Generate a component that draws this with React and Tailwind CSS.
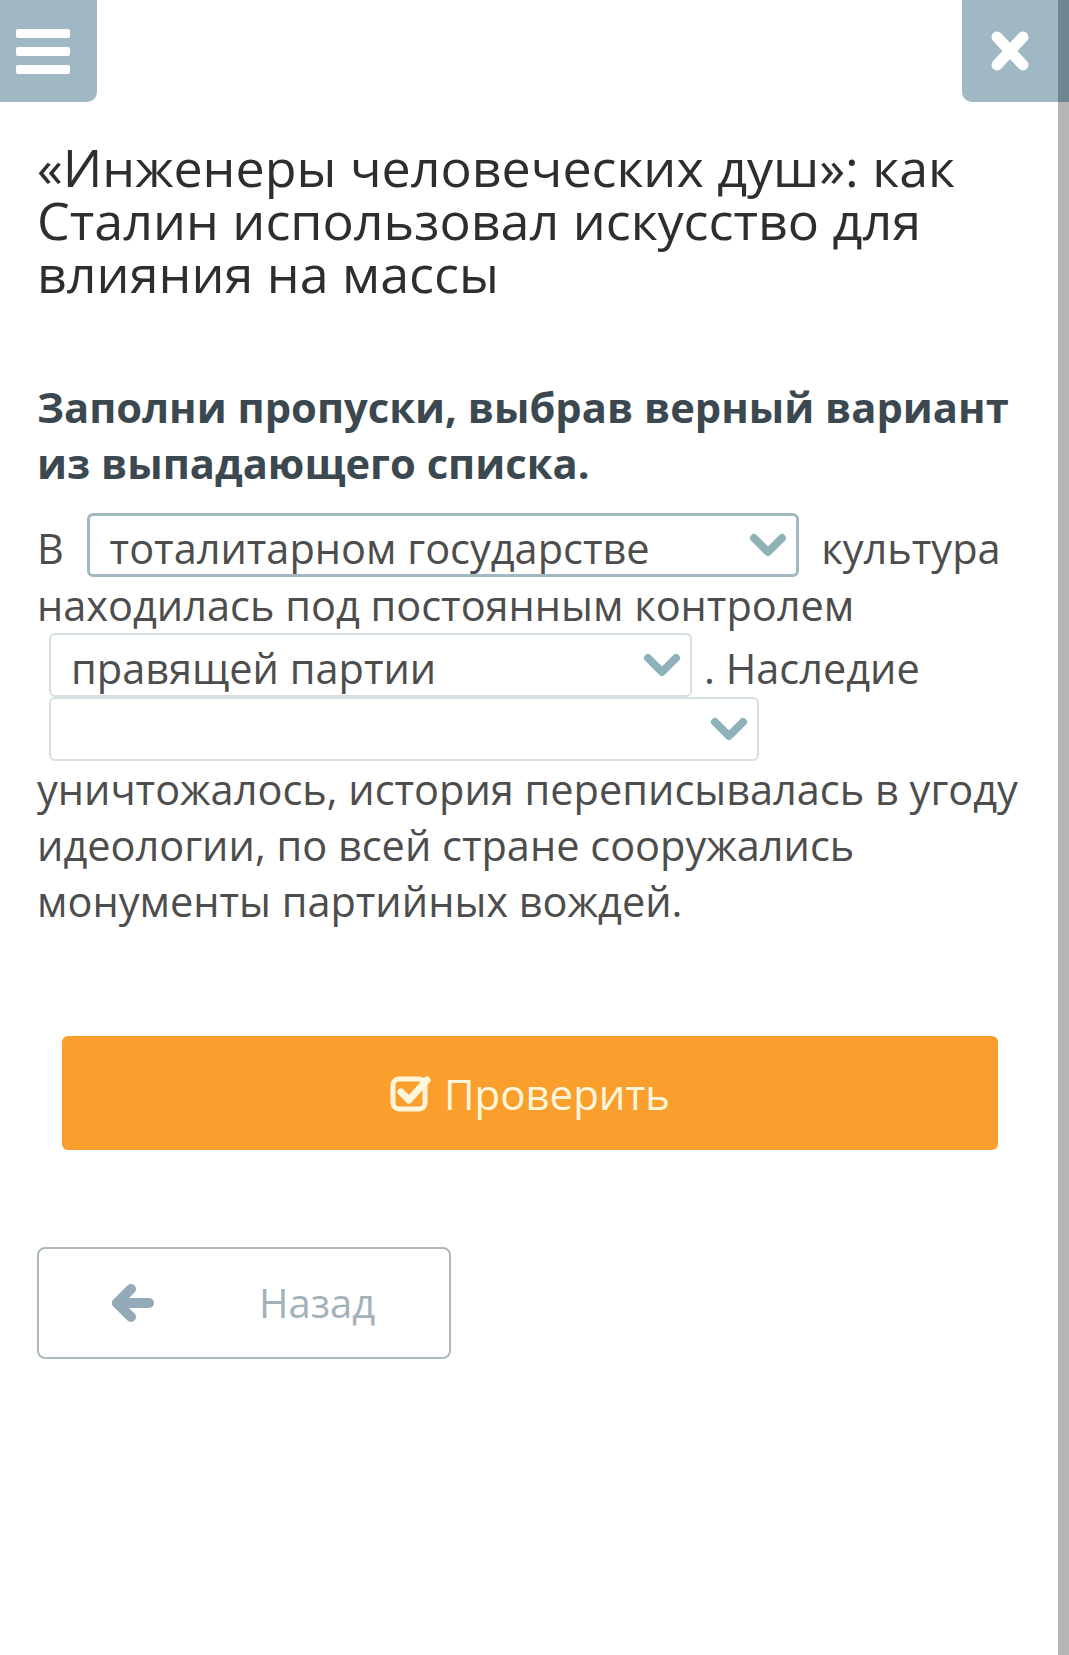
import React from 'react';

const Chevron = () => (
  <svg width="40" height="28" viewBox="0 0 40 28" className="shrink-0">
    <polyline points="6,7 20,21 34,7" fill="none" stroke="#8fb2ba" strokeWidth="8" strokeLinecap="round" strokeLinejoin="round" />
  </svg>
);

const Select = ({ value, width, focused }) => (
  <span
    className={`inline-flex items-center justify-between align-baseline mx-3 h-[64px] rounded-md bg-white pl-5 pr-2 ${width} ${
      focused ? 'border-[3px] border-[#a3b8c1]' : 'border-2 border-[#d5dfe2]'
    }`}
  >
    <span className="text-[#4d4d4d] mt-[6px]">{value || '\u00a0'}</span>
    <Chevron />
  </span>
);

const CheckIcon = () => (
  <svg width="42" height="38" viewBox="0 0 42 38">
    <rect x="3" y="5" width="32" height="30" rx="6" fill="none" stroke="#fff6dc" strokeWidth="5" />
    <polyline points="11,18 19,26 37,6" fill="none" stroke="#fff6dc" strokeWidth="7" strokeLinecap="round" strokeLinejoin="round" />
  </svg>
);

const ArrowLeft = () => (
  <svg width="46" height="38" viewBox="0 0 46 38">
    <line x1="8" y1="19" x2="40" y2="19" stroke="#93abb9" strokeWidth="10" strokeLinecap="round" />
    <polyline points="22,5 8,19 22,33" fill="none" stroke="#93abb9" strokeWidth="10" strokeLinecap="round" strokeLinejoin="round" />
  </svg>
);

export default function App() {
  return (
    <div className="flex min-h-[1655px] bg-white" style={{ fontFamily: '"Open Sans", "Noto Sans", sans-serif' }}>
      <div className="flex-1">
        <div className="flex justify-between">
          <button className="w-[97px] h-[102px] bg-[#a0b7c4] rounded-br-[10px] flex flex-col justify-center items-start pl-[16px] gap-[9px]">
            <span className="block w-[54px] h-[9px] bg-white rounded-[2px]" />
            <span className="block w-[54px] h-[9px] bg-white rounded-[2px]" />
            <span className="block w-[54px] h-[9px] bg-white rounded-[2px]" />
          </button>
          <button className="w-[96px] h-[102px] bg-[#a0b7c4] rounded-bl-[10px] flex items-center justify-center">
            <svg width="46" height="44" viewBox="0 0 46 44">
              <line x1="10" y1="8" x2="36" y2="36" stroke="#fff" strokeWidth="11" strokeLinecap="round" />
              <line x1="36" y1="8" x2="10" y2="36" stroke="#fff" strokeWidth="11" strokeLinecap="round" />
            </svg>
          </button>
        </div>

        <div className="px-[37px]">
          <h1 className="mt-[38px] text-[52px] leading-[53px] text-[#2e2e2e]">
            «Инженеры человеческих душ»: как Сталин использовал искусство для влияния на массы
          </h1>

          <h2 className="mt-[80px] text-[41.7px] leading-[56px] font-bold text-[#3b4850]">
            Заполни пропуски, выбрав верный вариант из выпадающего списка.
          </h2>

          <p className="mt-[22px] text-[41.5px] leading-[56px] text-[#4d4d4d]">
            В <Select value="тоталитарном государстве" width="w-[712px]" focused /> культура находилась под постоянным контролем
            <Select value="правящей партии" width="w-[643px]" />. Наследие
            <Select value="" width="w-[710px]" />
            уничтожалось, история переписывалась в угоду идеологии, по всей стране сооружались монументы партийных вождей.
          </p>

          <div className="mt-[107px] ml-[25px] mr-[23px]">
            <button className="w-full h-[114px] rounded-md bg-[#fa9f2d] flex items-center justify-center gap-3 text-[42px] text-[#fff6dc]">
              <CheckIcon />
              <span>Проверить</span>
            </button>
          </div>

          <button className="mt-[97px] w-[414px] h-[112px] rounded-lg border-2 border-[#adb9be] bg-white flex items-center">
            <span className="ml-[70px]"><ArrowLeft /></span>
            <span className="ml-[104px] text-[40px] text-[#a3b1b8]">Назад</span>
          </button>
        </div>
      </div>
      <div className="w-[11px] flex flex-col">
        <div className="h-[102px] bg-[#6e8592]" />
        <div className="flex-1 bg-[#b5b5b5]" />
      </div>
    </div>
  );
}
